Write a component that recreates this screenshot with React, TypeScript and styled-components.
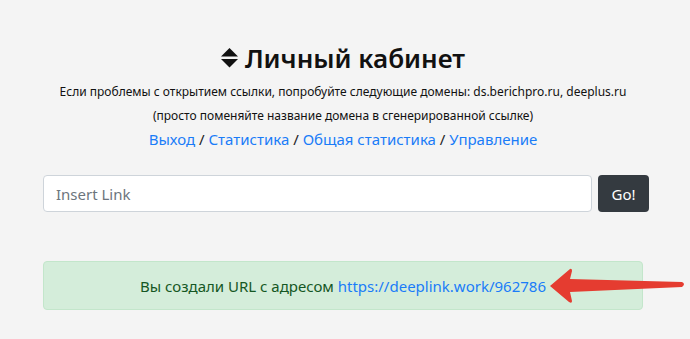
import React from "react";
import styled, { createGlobalStyle } from "styled-components";

const GlobalStyle = createGlobalStyle`
  body {
    margin: 0;
    background: #f4f4f4;
    font-family: "Noto Sans", "Open Sans", sans-serif;
    color: #212529;
  }
`;

const Page = styled.div`
  position: relative;
  width: 690px;
  height: 339px;
  overflow: hidden;
`;

const Container = styled.div`
  width: 600px;
  margin-left: 43px;
  padding-top: 40px;
  display: flex;
  flex-direction: column;
  align-items: center;
`;

const Title = styled.h1`
  margin: 0;
  display: flex;
  align-items: center;
  gap: 7px;
  font-size: 26px;
  font-weight: 600;
  line-height: 36px;
  color: #111;
`;

const Note = styled.p<{ $first?: boolean }>`
  margin: ${(p) => (p.$first ? "4px" : "0")} 0 0;
  font-size: 12px;
  line-height: 24px;
  color: #111;
  text-align: center;
`;

const Nav = styled.div`
  font-size: 15px;
  line-height: 22px;
  color: #222;
`;

const Link = styled.a`
  color: #1a7cf8;
  text-decoration: none;
`;

const Form = styled.div`
  align-self: stretch;
  display: flex;
  gap: 6px;
  margin-top: 25px;
  margin-right: -6px;
`;

const Input = styled.input`
  flex: 1;
  height: 37px;
  box-sizing: border-box;
  border: 1px solid #ced4da;
  border-radius: 4px;
  background: #fff;
  padding: 0 12px;
  font-family: inherit;
  font-size: 15px;
  color: #495057;
  &::placeholder {
    color: #6c757d;
  }
`;

const Button = styled.button`
  width: 51px;
  height: 37px;
  border: none;
  border-radius: 4px;
  background: #343a40;
  color: #fff;
  font-family: inherit;
  font-size: 15px;
`;

const Alert = styled.div`
  align-self: stretch;
  margin-top: 49px;
  height: 49px;
  box-sizing: border-box;
  display: flex;
  align-items: center;
  justify-content: center;
  background: #d4edda;
  border: 1px solid #c3e6cb;
  border-radius: 4px;
  font-size: 15px;
  color: #155724;
`;

const Arrow = styled.svg`
  position: absolute;
  left: 548px;
  top: 266px;
`;

const SortIcon = () => (
  <svg width="17" height="20" viewBox="0 0 17 20">
    <path d="M8.5 0 L17 8.5 H0 Z" fill="#111" />
    <path d="M0 11 H17 L8.5 19.5 Z" fill="#111" />
  </svg>
);

export default function App() {
  return (
    <Page>
      <GlobalStyle />
      <Container>
        <Title>
          <SortIcon />
          Личный кабинет
        </Title>
        <Note $first>
          Если проблемы с открытием ссылки, попробуйте следующие домены: ds.berichpro.ru, deeplus.ru
        </Note>
        <Note>(просто поменяйте название домена в сгенерированной ссылке)</Note>
        <Nav>
          <Link href="#">Выход</Link> / <Link href="#">Статистика</Link> /{" "}
          <Link href="#">Общая статистика</Link> / <Link href="#">Управление</Link>
        </Nav>
        <Form>
          <Input placeholder="Insert Link" />
          <Button>Go!</Button>
        </Form>
        <Alert>
          Вы создали URL с адресом&nbsp;<Link href="#">https://deeplink.work/962786</Link>
        </Alert>
      </Container>
      <Arrow width="140" height="40" viewBox="0 0 140 40">
        <path
          d="M2 20 L22 3 Q24 2 24 5 L22 13 L134 16 Q138 18 134 21 L22 26 L24 35 Q24 38 21 36 Z"
          fill="#e53c30"
        />
      </Arrow>
    </Page>
  );
}
